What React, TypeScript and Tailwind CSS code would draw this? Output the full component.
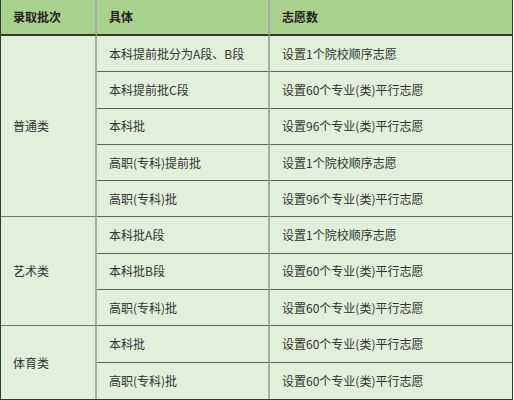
import React from 'react';

type Group = {
  name: string;
  rows: Array<[string, string]>;
};

const groups: Group[] = [
  {
    name: '普通类',
    rows: [
      ['本科提前批分为A段、B段', '设置1个院校顺序志愿'],
      ['本科提前批C段', '设置60个专业(类)平行志愿'],
      ['本科批', '设置96个专业(类)平行志愿'],
      ['高职(专科)提前批', '设置1个院校顺序志愿'],
      ['高职(专科)批', '设置96个专业(类)平行志愿'],
    ],
  },
  {
    name: '艺术类',
    rows: [
      ['本科批A段', '设置1个院校顺序志愿'],
      ['本科批B段', '设置60个专业(类)平行志愿'],
      ['高职(专科)批', '设置60个专业(类)平行志愿'],
    ],
  },
  {
    name: '体育类',
    rows: [
      ['本科批', '设置60个专业(类)平行志愿'],
      ['高职(专科)批', '设置60个专业(类)平行志愿'],
    ],
  },
];

const rowSpanClass: Record<number, string> = {
  2: 'row-span-2',
  3: 'row-span-3',
  5: 'row-span-5',
};

const App: React.FC = () => {
  const total = groups.reduce((n, g) => n + g.rows.length, 0);
  let index = 0;

  return (
    <div
      className="w-[514px] h-[400px] bg-white overflow-hidden"
      style={{ fontFamily: '"Microsoft YaHei", "Noto Sans CJK SC", "Noto Sans", sans-serif' }}
    >
      <div className="w-[513px] grid grid-cols-[96px_173px_1fr] grid-rows-[36px_repeat(10,36.3px)] border-l border-r border-b border-[#2f3d2f] bg-[#e2efd9] text-[12px] text-[#333]">
        {/* Header */}
        <div className="flex items-center pl-3 bg-[#a9d18e] border-b-2 border-r-2 border-b-[#2f3d2f] border-r-[#a3b0a3] font-bold text-[#222]">
          录取批次
        </div>
        <div className="flex items-center pl-3 bg-[#a9d18e] border-b-2 border-r-2 border-b-[#2f3d2f] border-r-[#a3b0a3] font-bold text-[#222]">
          具体
        </div>
        <div className="flex items-center pl-3 bg-[#a9d18e] border-b-2 border-b-[#2f3d2f] font-bold text-[#222]">
          志愿数
        </div>

        {groups.map((g, gi) => {
          const lastGroup = gi === groups.length - 1;
          return (
            <React.Fragment key={g.name}>
              <div
                className={`flex items-center pl-3 border-r-2 border-r-[#a3b0a3] ${rowSpanClass[g.rows.length]} ${
                  lastGroup ? '' : 'border-b border-b-[#6d786d]'
                }`}
              >
                {g.name}
              </div>
              {g.rows.map(([detail, count]) => {
                index += 1;
                const last = index === total;
                const bottom = last ? '' : 'border-b border-b-[#5c665c]';
                return (
                  <React.Fragment key={index}>
                    <div className={`flex items-center pl-3 border-r-2 border-r-[#a3b0a3] ${bottom}`}>{detail}</div>
                    <div className={`flex items-center pl-3 ${bottom}`}>{count}</div>
                  </React.Fragment>
                );
              })}
            </React.Fragment>
          );
        })}
      </div>
    </div>
  );
};

export default App;
